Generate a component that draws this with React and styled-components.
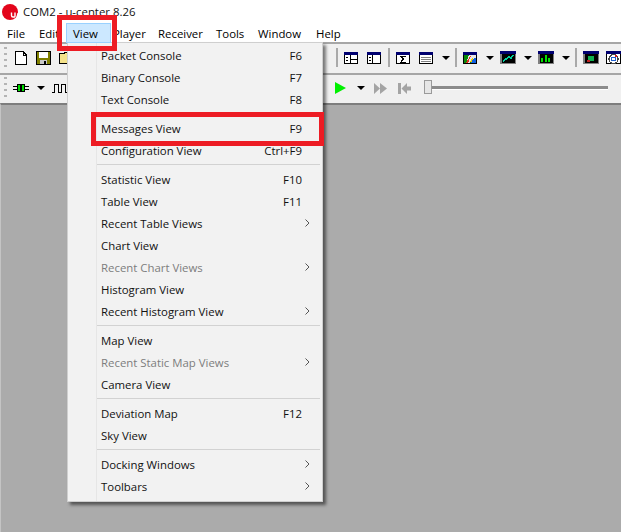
import React from 'react';
import styled, { createGlobalStyle } from 'styled-components';

const GlobalStyle = createGlobalStyle`
  html, body { margin: 0; padding: 0; background: #ababab; }
  body { font-family: "Open Sans", "Noto Sans", sans-serif; font-size: 11.4px; color: #000; }
`;

const Window = styled.div`
  position: relative;
  width: 621px;
  height: 532px;
  overflow: hidden;
  display: flex;
  flex-direction: column;
`;

const TitleBar = styled.div`
  height: 23px;
  background: #fff;
  display: flex;
  align-items: center;
  padding-left: 2px;
  gap: 5px;
  color: #111;
`;

const MenuBar = styled.div`
  height: 18px;
  padding-top: 1px;
  background: #fff;
  display: flex;
  align-items: center;
  padding-left: 7px;
`;

const MenuName = styled.span`
  width: ${(p) => p.$w}px;
  flex: none;
`;

const Toolbar = styled.div`
  height: ${(p) => p.$h}px;
  padding-bottom: 2px;
  box-sizing: content-box;
  background: #f0f0f0;
  border-top: 2px solid #a6a6a6;
  display: flex;
  align-items: center;
  justify-content: space-between;
  padding-left: 4px;
`;

const Group = styled.div`
  display: flex;
  align-items: center;
`;

const Gripper = styled.div`
  width: 3px;
  height: 22px;
  margin-right: ${(p) => p.$after}px;
  background: repeating-linear-gradient(to bottom, #b4b4b4 0 2px, transparent 2px 6px);
`;

const Sep = styled.div`
  width: 2px;
  height: 19px;
  background: #a9a9a9;
  margin: 0 ${(p) => p.$r}px 0 0;
`;

const Glyph = styled.svg`
  display: block;
  flex: none;
  margin-right: ${(p) => p.$after || 0}px;
  shape-rendering: crispEdges;
`;

const Caret = styled.div`
  width: 0;
  height: 0;
  flex: none;
  border-left: 4px solid transparent;
  border-right: 4px solid transparent;
  border-top: 4px solid #000;
  margin-right: ${(p) => p.$after}px;
`;

const Slider = styled.div`
  position: relative;
  width: 184px;
  height: 3px;
  margin-right: 13px;
  background: #8c8c8c;
  border-bottom: 1px solid #fff;
`;

const Thumb = styled.div`
  position: absolute;
  left: 0;
  top: -6px;
  width: 6px;
  height: 12px;
  background: #e6e6e6;
  border: 1px solid #9a9a9a;
`;

const Workspace = styled.div`
  flex: 1;
  background: #ababab;
  border-top: 2px solid #7d7d7d;
  border-left: 1px solid #c4c4c4;
`;

const Menu = styled.div`
  position: absolute;
  left: 67px;
  top: 42px;
  width: 254px;
  height: 456px;
  padding: 1px 0 1px;
  background: linear-gradient(to right, #f2f2f2 28px, #e6e6e6 28px 29px, #f2f2f2 29px);
  border: 1px solid #cfcfcf;
  box-shadow: 3px 3px 3px rgba(0, 0, 0, 0.5);
`;

const Row = styled.div`
  height: 22px;
  display: flex;
  align-items: center;
  padding-left: 33px;
  color: ${(p) => (p.$off ? '#7d7d7d' : '#111')};
`;

const Label = styled.span`
  flex: 1;
  white-space: nowrap;
`;

const Keys = styled.span`
  width: 60px;
  margin-right: 20px;
  text-align: right;
`;

const Arrow = styled.svg`
  margin-right: 12px;
  flex: none;
`;

const Divider = styled.div`
  height: 1px;
  margin: 3px 2px 3px 29px;
  background: #d2d2d2;
`;

const Hot = styled.div`
  position: absolute;
  left: 66px;
  top: 23px;
  width: 37px;
  height: 18px;
  border: 1px solid #99d1ff;
  background: #cce8ff;
  padding-left: 6px;
  line-height: 19px;
`;

const Callout = styled.div`
  position: absolute;
  left: ${(p) => p.$x}px;
  top: ${(p) => p.$y}px;
  width: ${(p) => p.$w}px;
  height: ${(p) => p.$h}px;
  box-sizing: border-box;
  border: ${(p) => p.$t}px solid #ed1c24;
`;

const Logo = () => (
  <svg width="16" height="16" viewBox="0 0 16 16">
    <circle cx="8" cy="8" r="8" fill="#e3051b" />
    <path d="M9.500 8.500v3q0 1.500 1.500 1.500h1.500q.5 0 .5-1V8.500" fill="none" stroke="#fff" strokeWidth="1.400" />
    <path d="M15.500 9h.5v3.500h-1.500Z" fill="#fff" />
  </svg>
);

const Framed = ({ after, dark, w = 14, h = 12, children }) => (
  <Glyph width={w} height={h} viewBox={`0 0 ${w} ${h}`} $after={after}>
    <rect x="0.500" y="0.500" width={w - 1} height={h - 1} fill={dark ? '#000' : '#fff'} stroke={dark ? '#808080' : '#000'} />
    {dark && <rect x="1" y="1" width={w - 2} height={h - 2} fill="#000" stroke="#808080" />}
    <rect x="0" y="0" width={w} height="3" fill="#000070" />
    {children}
  </Glyph>
);

const Chevron = () => (
  <Arrow width="5" height="8" viewBox="0 0 5 8">
    <path d="M0.500 0.500L4 4L0.500 7.500" fill="none" stroke="#555" />
  </Arrow>
);

const Page = () => (
  <Glyph width="12" height="14" viewBox="0 0 12 14" $after={9}>
    <path d="M.5.500H8L11.500 4V13.500H.5Z M8 .5V4H11.500" fill="#fff" stroke="#000" />
  </Glyph>
);

const Disk = () => (
  <Glyph width="15" height="14" viewBox="0 0 15 14" $after={8}>
    <rect x=".5" y=".5" width="14" height="13" fill="#808000" stroke="#000" />
    <rect x="3" y="1" width="9" height="6" fill="#fff" />
    <rect x="4" y="9" width="7" height="4" fill="#c8c8c8" />
    <rect x="8" y="10" width="2" height="3" fill="#000" />
  </Glyph>
);

const Folder = () => (
  <Glyph width="14" height="12" viewBox="0 0 14 12">
    <path d="M.5 1.500H5L6 .5H10V3H13.500L10 11.500H.5Z" fill="#f4e28a" stroke="#000" />
  </Glyph>
);

const Resistor = () => (
  <Glyph width="16" height="8" viewBox="0 0 16 8" $after={8}>
    <rect x="0" y="2" width="16" height="1" fill="#000" />
    <rect x="0" y="5" width="16" height="1" fill="#000" />
    <rect x="4" y="0" width="8" height="8" fill="#000" />
    <rect x="5" y="1" width="2" height="6" fill="#00e000" />
    <rect x="9" y="1" width="2" height="6" fill="#00e000" />
  </Glyph>
);

const Pulse = () => (
  <Glyph width="15" height="9" viewBox="0 0 15 9">
    <path d="M0 8.500H2.500V.5H6.500V8.500H9.500V.5H13.500V8.500H15" fill="none" stroke="#000" />
  </Glyph>
);

const Play = () => (
  <Glyph width="11" height="12" viewBox="0 0 11 12" $after={11} style={{ shapeRendering: 'auto' }}>
    <path d="M0 0L11 6L0 12Z" fill="#00f000" />
  </Glyph>
);

const Forward = () => (
  <Glyph width="13" height="11" viewBox="0 0 13 11" $after={11} style={{ shapeRendering: 'auto' }}>
    <path d="M0 0L6 5.500L0 11Z M6 0L13 5.500L6 11Z" fill="#a4a4a4" />
  </Glyph>
);

const Rewind = () => (
  <Glyph width="13" height="11" viewBox="0 0 13 11" $after={13} style={{ shapeRendering: 'auto' }}>
    <path d="M0 0H3V11H0Z M9 0V3.500H13V7.500H9V11L3.500 5.500Z" fill="#a4a4a4" />
  </Glyph>
);

const SMALL_ARROW = (
  <Glyph width="3" height="6" viewBox="0 0 3 6" $after={12}>
    <path d="M0 0L3 3L0 6Z" fill="#b0b0b0" />
  </Glyph>
);

const MENU = [
  [['Packet Console', 'F6'], ['Binary Console', 'F7'], ['Text Console', 'F8']],
  [['Messages View', 'F9'], ['Configuration View', 'Ctrl+F9']],
  [
    ['Statistic View', 'F10'],
    ['Table View', 'F11'],
    ['Recent Table Views', '>'],
    ['Chart View'],
    ['Recent Chart Views', '>', true],
    ['Histogram View'],
    ['Recent Histogram View', '>'],
  ],
  [['Map View'], ['Recent Static Map Views', '>', true], ['Camera View']],
  [['Deviation Map', 'F12'], ['Sky View']],
  [['Docking Windows', '>'], ['Toolbars', '>']],
];

const NAMES = [
  ['File', 32],
  ['Edit', 34],
  ['View', 40],
  ['Player', 45],
  ['Receiver', 58],
  ['Tools', 42],
  ['Window', 58],
  ['Help', 40],
];

export default function App() {
  return (
    <Window>
      <GlobalStyle />
      <TitleBar>
        <Logo />
        <span>COM2 - u-center 8.26</span>
      </TitleBar>
      <MenuBar>
        {NAMES.map(([name, w]) => (
          <MenuName key={name} $w={w}>{name}</MenuName>
        ))}
      </MenuBar>
      <Toolbar $h={27}>
        <Group>
          <Gripper $after={8} />
          <Page />
          <Disk />
          <Folder />
        </Group>
        <Group>
          <Sep $r={6} />
          <Framed after={9}>
            <rect x="6" y="3" width="1" height="8" fill="#000" />
            <rect x="6" y="7" width="7" height="1" fill="#000" />
            <rect x="2" y="5" width="2" height="1" fill="#000" />
            <rect x="2" y="8" width="2" height="1" fill="#000" />
          </Framed>
          <Framed after={7}>
            <rect x="5" y="3" width="1" height="8" fill="#000" />
            <rect x="2" y="5" width="2" height="1" fill="#000" />
            <rect x="2" y="8" width="2" height="1" fill="#000" />
          </Framed>
          <Sep $r={6} />
          <Framed after={9}>
            <path d="M4 4H10V5H6L8 7L6 10H10V11H4L6 7Z" fill="#000" />
          </Framed>
          <Framed after={9}>
            <path d="M2 5H12M2 7H12M2 9H12" stroke="#808080" fill="none" />
          </Framed>
          <Caret $after={5} />
          <Sep $r={6} />
          <Framed after={9}>
            <path d="M1 3H13V11H1Z" fill="#0a8a0a" />
            <path d="M6 3H13V7H9L7 11H3Z" fill="#e8e8e8" />
            <path d="M8 7L13 6V11H8Z" fill="#1060e0" />
            <path d="M3 11L7 4L8 4L5 11Z" fill="#e03020" />
            <path d="M7 10L9 6L10 7L9 10Z" fill="#f0d000" />
          </Framed>
          <Caret $after={6} />
          <Framed w={16} h={13} dark after={8}>
            <path d="M3 10L6 8L9 6L11 7L13 4" fill="none" stroke="#00d0a0" strokeWidth="1.500" />
          </Framed>
          <Caret $after={6} />
          <Framed w={16} h={13} dark after={8}>
            <path d="M3 11V7H5V11Z M7 11V4H9V11Z M10 11V7H12V11Z" fill="#00e000" />
          </Framed>
          <Caret $after={5} />
          <Sep $r={6} />
          <Framed w={16} h={13} dark after={7}>
            <rect x="5" y="5" width="6" height="5" fill="#10b050" />
            <rect x="4" y="9" width="3" height="2" fill="#c02020" />
          </Framed>
          <Framed w={15} h={13}>
            <circle cx="7.500" cy="8" r="4.500" fill="none" stroke="#444" strokeWidth="1.500" />
            <circle cx="7.500" cy="8" r="2" fill="none" stroke="#2060d0" />
            <rect x="9" y="4" width="2" height="2" fill="#d02020" />
          </Framed>
        </Group>
      </Toolbar>
      <Toolbar $h={26}>
        <Group>
          <Gripper $after={6} />
          <Resistor />
          <Caret $after={7} />
          <Pulse />
        </Group>
        <Group>
          {SMALL_ARROW}
          <Play />
          <Caret $after={9} />
          <Forward />
          <Rewind />
          <Slider>
            <Thumb />
          </Slider>
        </Group>
      </Toolbar>
      <Workspace />

      <Menu>
        {MENU.map((section, i) => (
          <React.Fragment key={i}>
            {i > 0 && <Divider />}
            {section.map(([label, key, off]) => (
              <Row key={label} $off={off}>
                <Label>{label}</Label>
                {key === '>' ? <Chevron /> : key ? <Keys>{key}</Keys> : null}
              </Row>
            ))}
          </React.Fragment>
        ))}
      </Menu>
      <Hot>View</Hot>
      <Callout $x={57} $y={15} $w={60} $h={36} $t={5} />
      <Callout $x={91} $y={112} $w={233} $h={34} $t={5} />
    </Window>
  );
}
